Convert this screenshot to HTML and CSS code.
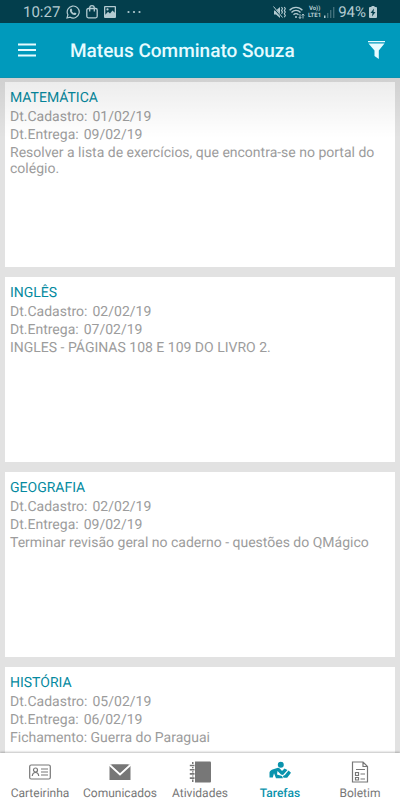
FILE: index.html
```html
<!DOCTYPE html>
<html lang="pt-BR">
<head>
<meta charset="utf-8">
<meta name="viewport" content="width=device-width, initial-scale=1">
<title>Tarefas</title>
<link rel="stylesheet" href="styles.css">
</head>
<body>
<div class="status">
  <span class="clock">10:27</span>
  <svg class="status-icon" width="14" height="14" viewBox="0 0 14 14" fill="none" stroke="currentColor"><path d="M1 13l.9-3.200A6 6 0 1 1 4.200 12.200z" stroke-width="1.200"/><path d="M4.500 3.700l1-.2.8 1.700-.6.8c.5 1 1.200 1.700 2.200 2.200l.8-.8 1.700.8c0 1.300-.9 1.900-2 1.800C5.800 9.600 4 7.400 3.900 5.500c0-.8.2-1.400.6-1.800z" fill="currentColor" stroke="none"/></svg>
  <svg class="status-icon" width="12" height="14" viewBox="0 0 12 14" fill="none" stroke="currentColor" stroke-width="1.300"><rect x=".8" y="3.500" width="10.400" height="9.300" rx="1.500"/><path d="M3.700 6.500V3a2.300 2.300 0 0 1 4.600 0v3.500"/></svg>
  <svg class="status-icon" width="12" height="12" viewBox="0 0 12 12"><path fill="currentColor" fill-rule="evenodd" d="M1 0h10a1 1 0 0 1 1 1v10a1 1 0 0 1-1 1H1a1 1 0 0 1-1-1V1a1 1 0 0 1 1-1zm.3 1.300v7.400L4 5.800l2 1.700 2.500-3 2.200 2.300V1.300zM3.500 2.300a1.100 1.100 0 1 1 0 2.200 1.100 1.100 0 0 1 0-2.200z"/></svg>
  <svg class="more" width="14" height="4" viewBox="0 0 14 4" fill="currentColor"><circle cx="1.500" cy="2" r="1.100"/><circle cx="7" cy="2" r="1.100"/><circle cx="12.500" cy="2" r="1.100"/></svg>
  <div class="signals">
    <svg width="13" height="13" viewBox="0 0 13 13" fill="none" stroke="currentColor"><path d="M1 4.500h2L7 1v11L3 8.500H1z" fill="currentColor" stroke="none"/><path d="M0 1l9 10" stroke="#033e4c" stroke-width="1.800"/><path d="M.5.500l9 11"/><path d="M8.500 1l1 1.700-1 1.700 1 1.700-1 1.700M11.300 1l1 1.700-1 1.700 1 1.700-1 1.700 1 1.700-1 1.700" stroke-width="1.100"/></svg>
    <svg width="16" height="13" viewBox="0 0 16 13" fill="none" stroke="currentColor" stroke-width="1.300"><path d="M.6 4.200a8.500 8.500 0 0 1 12.800 0M2.500 6.500a6 6 0 0 1 9 0M4.500 8.700a3.500 3.500 0 0 1 5 0"/><circle cx="7" cy="11" r="1" fill="currentColor" stroke="none"/><path d="M11 8v4.500M9.700 11l1.300 1.500L12.300 11M14 12.500V8M12.700 9.500L14 8l1.300 1.500" stroke-width=".9"/></svg>
    <span class="lte"><span>Vo))</span><span>LTE1</span></span>
    <svg width="11" height="12" viewBox="0 0 11 12" fill="currentColor"><path d="M0 9.500h1.500V12H0z"/><path opacity=".35" d="M3 7h1.400v5H3zM6 4h1.400v8H6zM9 1h1.400v11H9z"/></svg>
    <span class="percent">94%</span>
    <svg class="battery" width="8" height="12" viewBox="0 0 8 12"><path fill="currentColor" fill-rule="evenodd" d="M2.500 0h3v1H7a1 1 0 0 1 1 1v9a1 1 0 0 1-1 1H1a1 1 0 0 1-1-1V2a1 1 0 0 1 1-1h1.500zM5 2.500L1.500 7h2L3 10.500 6.500 6h-2z"/></svg>
  </div>
</div>
<header class="topbar">
  <button class="icon-button" type="button" aria-label="Menu"><svg width="18" height="14" viewBox="0 0 18 14" stroke="currentColor" stroke-width="1.800"><path d="M0 1.500h18M0 7h18M0 12.500h18"/></svg></button>
  <h1 class="title">Mateus Comminato Souza</h1>
  <button class="icon-button" type="button" aria-label="Filtrar"><svg width="17" height="18" viewBox="0 0 17 18" fill="currentColor"><path d="M0 0h17v1.300H0zM.5 2.500h16L10.800 9.500V18L6.500 15V9.500z"/></svg></button>
</header>
<main class="tasks">
  <article class="card">
    <h2 class="subject">MATEMÁTICA</h2>
    <p class="meta"><span>Dt.Cadastro:</span><time>01/02/19</time></p>
    <p class="meta"><span>Dt.Entrega:</span><time>09/02/19</time></p>
    <p class="text">Resolver a lista de exercícios, que encontra-se no portal do colégio.</p>
  </article>
  <article class="card">
    <h2 class="subject">INGLÊS</h2>
    <p class="meta"><span>Dt.Cadastro:</span><time>02/02/19</time></p>
    <p class="meta"><span>Dt.Entrega:</span><time>07/02/19</time></p>
    <p class="text">INGLES - PÁGINAS 108 E 109 DO LIVRO 2.</p>
  </article>
  <article class="card">
    <h2 class="subject">GEOGRAFIA</h2>
    <p class="meta"><span>Dt.Cadastro:</span><time>02/02/19</time></p>
    <p class="meta"><span>Dt.Entrega:</span><time>09/02/19</time></p>
    <p class="text">Terminar revisão geral no caderno - questões do QMágico</p>
  </article>
  <article class="card">
    <h2 class="subject">HISTÓRIA</h2>
    <p class="meta"><span>Dt.Cadastro:</span><time>05/02/19</time></p>
    <p class="meta"><span>Dt.Entrega:</span><time>06/02/19</time></p>
    <p class="text">Fichamento: Guerra do Paraguai</p>
  </article>
</main>
<nav class="tabs">
  <a class="tab" href="#carteirinha">
    <svg width="22" height="22" viewBox="0 0 22 22" fill="none" stroke="currentColor" stroke-width="1.200"><rect x=".7" y="4" width="20.600" height="14" rx="1.500"/><circle cx="6.500" cy="9" r="2"/><path d="M3.300 15c.2-2.300 1.300-3.500 3.200-3.500s3 1.200 3.200 3.500M12 8h7M12 11h7M12 14h7"/></svg>
    <span>Carteirinha</span>
  </a>
  <a class="tab" href="#comunicados">
    <svg width="22" height="22" viewBox="0 0 22 22" fill="currentColor"><path d="M.5 3.500h21v15.500H.5z"/><path d="M0 3.500l11 10 11-10" fill="none" stroke="#fff" stroke-width="2"/><path d="M2.500 3.500h17L11 11.500z"/></svg>
    <span>Comunicados</span>
  </a>
  <a class="tab" href="#atividades">
    <svg width="22" height="22" viewBox="0 0 22 22" fill="currentColor"><path d="M3 1h1.500v20H3z"/><path d="M6 .5h15a1 1 0 0 1 1 1v19a1 1 0 0 1-1 1H6z"/><path d="M1 4.500h4.500M1 8.700h4.500M1 12.900h4.500M1 17.100h4.500" stroke="#fff" stroke-width="3"/><path d="M.8 4.500h4.700M.8 8.700h4.700M.8 12.900h4.700M.8 17.100h4.700" stroke="currentColor" stroke-width="1.600"/></svg>
    <span>Atividades</span>
  </a>
  <a class="tab active" href="#tarefas" aria-current="page">
    <svg width="22" height="22" viewBox="0 0 22 22" fill="currentColor"><circle cx="11.800" cy="3.700" r="3"/><path d="M.5 16.500v-5C.8 10 2 9 3.500 8.500L9 6.800c1.500.2 2.500 1.200 4 3.200l2.500-2.500 3 1.500-4.500 5-2-.5-3.500-3.500-.5 3.500 5 1.500 1 2.200H7l-2-5-1.200 4.300z"/><path d="M19.500 9.500l2.500 2.200-3.800 5h-3.700l-.6-1.700 2-1z"/></svg>
    <span>Tarefas</span>
  </a>
  <a class="tab" href="#boletim">
    <svg width="22" height="22" viewBox="0 0 22 22" fill="none" stroke="currentColor" stroke-width="1.200"><path d="M3.500 1h10.500l4.500 4.500v15.500h-15zM14 1v4.500h4.500M7 8.500h9M11.500 13h4.500M11.500 18h4.500"/><path d="M6.500 11.500h3v3h-3zM6.500 16.500h3v2.500h-3z"/></svg>
    <span>Boletim</span>
  </a>
</nav>
</body>
</html>
```
FILE: styles.css
```css
* {
  box-sizing: border-box;
}

body {
  margin: 0;
  height: 100vh;
  display: flex;
  flex-direction: column;
  overflow: hidden;
  background: #e2e2e2;
  font-family: Roboto, "Liberation Sans", sans-serif;
  text-rendering: geometricPrecision;
}

h1,
h2,
p {
  margin: 0;
  font-weight: 400;
}

.status {
  flex: none;
  display: flex;
  align-items: center;
  gap: 6px;
  height: 23px;
  padding: 1px 23px 0;
  background: #033e4c;
  color: #b4cbd1;
  font-size: 15px;
  line-height: 22px;
}

.status svg {
  flex: none;
}

.more {
  margin-left: 5px;
}

.signals {
  display: flex;
  align-items: center;
  gap: 3px;
  margin-left: auto;
}

.lte {
  display: flex;
  flex-direction: column;
  align-items: center;
  font-size: 6px;
  font-weight: 700;
  line-height: 7px;
}

.topbar {
  flex: none;
  display: flex;
  align-items: center;
  height: 55px;
  padding: 0 15px 0 18px;
  background: #009abc;
  border-bottom: 1px solid #0a93b1;
  color: #e6fbff;
}

.title {
  flex: 1;
  margin-left: 34px;
  padding-top: 2px;
  font-size: 19px;
  font-weight: 500;
  line-height: 24px;
}

.icon-button {
  display: flex;
  padding: 0;
  border: 0;
  background: none;
  color: inherit;
}

.tasks {
  position: relative;
  flex: 1;
  min-height: 0;
  display: flex;
  flex-direction: column;
  gap: 10px;
  padding: 4px 5px 0;
  overflow: hidden;
}

/* Shadow cast by the top bar over the list */
.tasks::before {
  content: "";
  position: absolute;
  inset: 0 0 auto;
  height: 60px;
  background: linear-gradient(rgba(0, 0, 0, 0.08), rgba(0, 0, 0, 0));
  pointer-events: none;
}

.card {
  flex: none;
  min-height: 185px;
  padding: 7px 5px;
  background: #fff;
  color: #9c9c9c;
  font-size: 14px;
  line-height: 16px;
}

.subject {
  margin-bottom: 2px;
  color: #058aa0;
  font-size: 14px;
  line-height: 18px;
}

.meta {
  display: flex;
  gap: 5px;
  margin-bottom: 2px;
}

.tabs {
  position: relative;
  flex: none;
  display: grid;
  grid-template-columns: repeat(5, 1fr);
  height: 47px;
  background: #fff;
  box-shadow: 0 -1px 2px rgba(0, 0, 0, 0.25);
}

.tab {
  display: flex;
  flex-direction: column;
  align-items: center;
  gap: 2px;
  padding-top: 8px;
  color: #777;
  font-size: 12px;
  line-height: 16px;
  text-decoration: none;
}

.active {
  color: #0a93ad;
  font-weight: 500;
}
```
